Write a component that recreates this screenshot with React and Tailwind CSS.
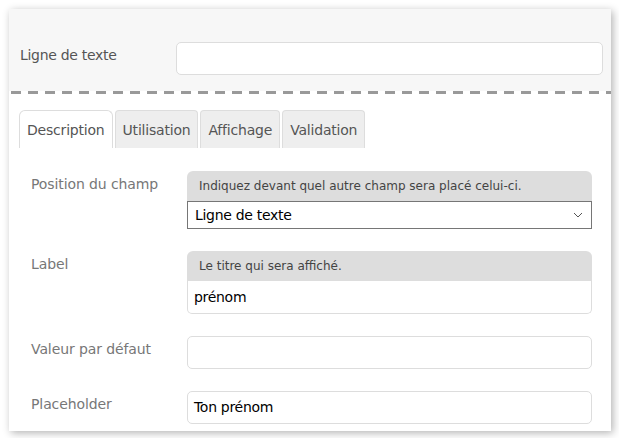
import React from 'react';

const font = { fontFamily: '"DejaVu Sans", Tahoma, sans-serif' };

const tabs = ['Description', 'Utilisation', 'Affichage', 'Validation'];

const Row = ({ label, children }) => (
  <div className="flex items-start">
    <div className="w-[178px] shrink-0 pl-[22px] pt-[3px] text-[14px] leading-[20px] tracking-[-0.1px] text-[#777]">{label}</div>
    <div className="w-[405px]">{children}</div>
  </div>
);

const Help = ({ children }) => (
  <div className="h-[30px] rounded-t-[6px] bg-[#dddddd] pl-[12px] text-[12px] leading-[30px] text-[#444]">
    {children}
  </div>
);

export default function App() {
  return (
    <div className="h-[438px] w-[619px] overflow-hidden bg-white pl-[9px] pt-[9px]" style={font}>
      <div className="flex h-[422px] w-[602px] flex-col bg-white shadow-[2px_2px_8px_rgba(0,0,0,0.3)]">
        {/* Top field */}
        <div className="flex h-[82px] items-start bg-[#f7f7f7] pt-[33px]">
          <div className="w-[167px] pl-[11px] pt-[3px] text-[14px] leading-[20px] tracking-[-0.3px] text-[#555]">Ligne de texte</div>
          <div className="h-[33px] w-[427px] rounded-[5px] border border-[#dddddd] bg-white" />
        </div>
        <div className="ml-[2px] h-[3px] bg-[repeating-linear-gradient(90deg,#999_0px,#999_10px,transparent_10px,transparent_17px)]" />

        {/* Tabs */}
        <div className="flex gap-[2px] pl-[10px] pt-[16px]">
          {tabs.map((t, i) => (
            <div
              key={t}
              className={
                i === 0
                  ? 'h-[38px] rounded-t-[6px] border border-b-0 border-[#dddddd] bg-white px-[7px] text-[14px] leading-[38px] tracking-[-0.2px] text-[#555]'
                  : 'h-[38px] rounded-t-[4px] border border-b-0 border-[#dddddd] bg-[#eeeeee] px-[7px] text-[14px] leading-[38px] tracking-[-0.2px] text-[#555]'
              }
            >
              {t}
            </div>
          ))}
        </div>

        {/* Form rows */}
        <div className="flex flex-col gap-[22px] pt-[23px]">
          <Row label="Position du champ">
            <Help>Indiquez devant quel autre champ sera placé celui-ci.</Help>
            <div className="flex h-[28px] items-center justify-between border border-[#767676] bg-white pl-[7px] pr-[8px] text-[14px] tracking-[-0.3px] text-black">
              <span>Ligne de texte</span>
              <svg width="10" height="6" viewBox="0 0 10 6" fill="none" stroke="#555" strokeWidth="1">
                <path d="M1 1l4 4 4-4" />
              </svg>
            </div>
          </Row>
          <Row label="Label">
            <Help>Le titre qui sera affiché.</Help>
            <div className="flex h-[33px] items-center rounded-b-[5px] border border-t-0 border-[#dddddd] bg-white pl-[6px] text-[14px] tracking-[-0.3px] text-black">
              prénom
            </div>
          </Row>
          <Row label="Valeur par défaut">
            <div className="h-[33px] rounded-[5px] border border-[#dddddd] bg-white" />
          </Row>
          <Row label="Placeholder">
            <div className="flex h-[33px] items-center rounded-[5px] border border-[#dddddd] bg-white pl-[6px] text-[14px] tracking-[-0.3px] text-black">
              Ton prénom
            </div>
          </Row>
        </div>
      </div>
    </div>
  );
}
